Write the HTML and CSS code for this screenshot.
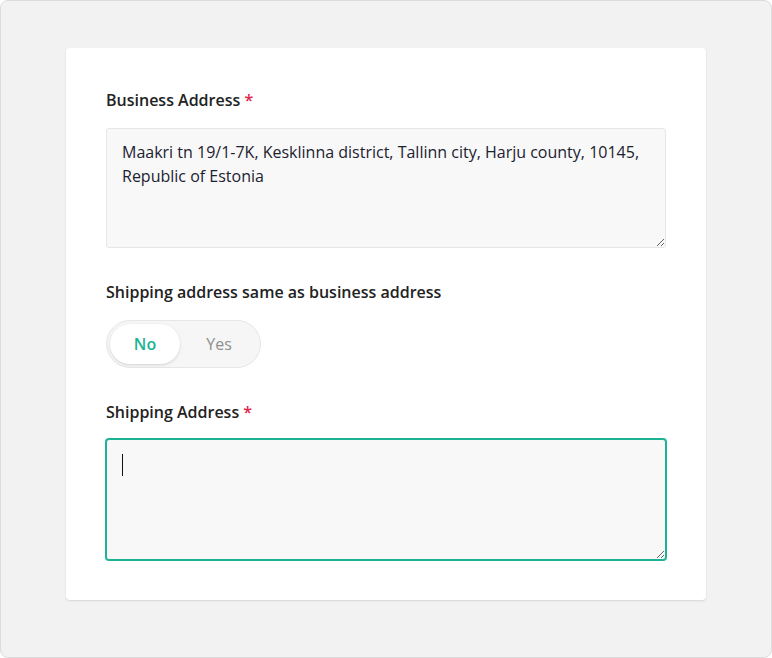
FILE: index.html
```html
<!DOCTYPE html>
<html lang="en">
<head>
<meta charset="utf-8">
<title>Address form</title>
<link rel="stylesheet" href="styles.css">
</head>
<body>
<div class="frame">
  <form class="card">
    <div class="field">
      <label class="label" for="biz">Business Address <span class="req">*</span></label>
      <textarea id="biz" class="input">Maakri tn 19/1-7K, Kesklinna district, Tallinn city, Harju county, 10145, Republic of Estonia</textarea>
    </div>
    <div class="field">
      <div class="label">Shipping address same as business address</div>
      <div class="toggle">
        <span class="opt active">No</span>
        <span class="opt">Yes</span>
      </div>
    </div>
    <div class="field">
      <label class="label" for="ship">Shipping Address <span class="req">*</span></label>
      <div class="wrap">
        <textarea id="ship" class="input focus"></textarea>
        <span class="caret"></span>
      </div>
    </div>
  </form>
</div>
</body>
</html>
```
FILE: styles.css
```css
* { box-sizing: border-box; }
html, body { margin: 0; padding: 0; }
body {
  font-family: "Open Sans", "Noto Sans", sans-serif;
  background: #fff;
}
.frame {
  width: 772px;
  height: 658px;
  background: #f2f2f2;
  border: 1px solid #dcdcdc;
  border-radius: 8px;
  padding-top: 47px;
  display: flex;
  justify-content: center;
  align-items: flex-start;
}
.card {
  width: 640px;
  background: #fff;
  border-radius: 4px;
  box-shadow: 0 1px 2px rgba(0,0,0,0.12);
  padding: 40px 40px 40px;
  display: flex;
  flex-direction: column;
  gap: 32px;
}
.field {
  display: flex;
  flex-direction: column;
  gap: 16px;
}
.label {
  font-size: 16px;
  line-height: 24px;
  font-weight: 600;
  color: #222;
}
.req { color: #e0244a; }
.input {
  display: block;
  width: 560px;
  height: 120px;
  background: #f8f8f8;
  border: 1px solid #e6e6e6;
  border-radius: 3px;
  padding: 11px 15px;
  font-family: "Open Sans", "Noto Sans", sans-serif;
  font-size: 16px;
  line-height: 24px;
  color: #1c2230;
  resize: vertical;
  outline: none;
  margin: 0;
}
.wrap { position: relative; width: 560px; margin-top: -1px; }
.input.focus {
  height: 121px;
  border-color: #1cb394;
  box-shadow: 0 0 0 1px #1cb394;
}
.caret {
  position: absolute;
  left: 16px;
  top: 15px;
  width: 1px;
  height: 22px;
  background: #111;
}
.toggle {
  align-self: flex-start;
  display: flex;
  align-items: center;
  width: 155px;
  height: 48px;
  padding: 3px;
  background: #f6f6f6;
  border: 1px solid #e6e6e6;
  border-radius: 24px;
}
.opt {
  flex: 0 0 auto;
  width: 70px;
  height: 40px;
  line-height: 40px;
  text-align: center;
  font-size: 16px;
  font-weight: 400;
  color: #8e8e8e;
  border-radius: 20px;
}
.opt + .opt { width: 78px; }
.opt.active {
  background: #fff;
  color: #1cb394;
  font-weight: 600;
  box-shadow: 0 1px 3px rgba(0,0,0,0.15);
}
```
